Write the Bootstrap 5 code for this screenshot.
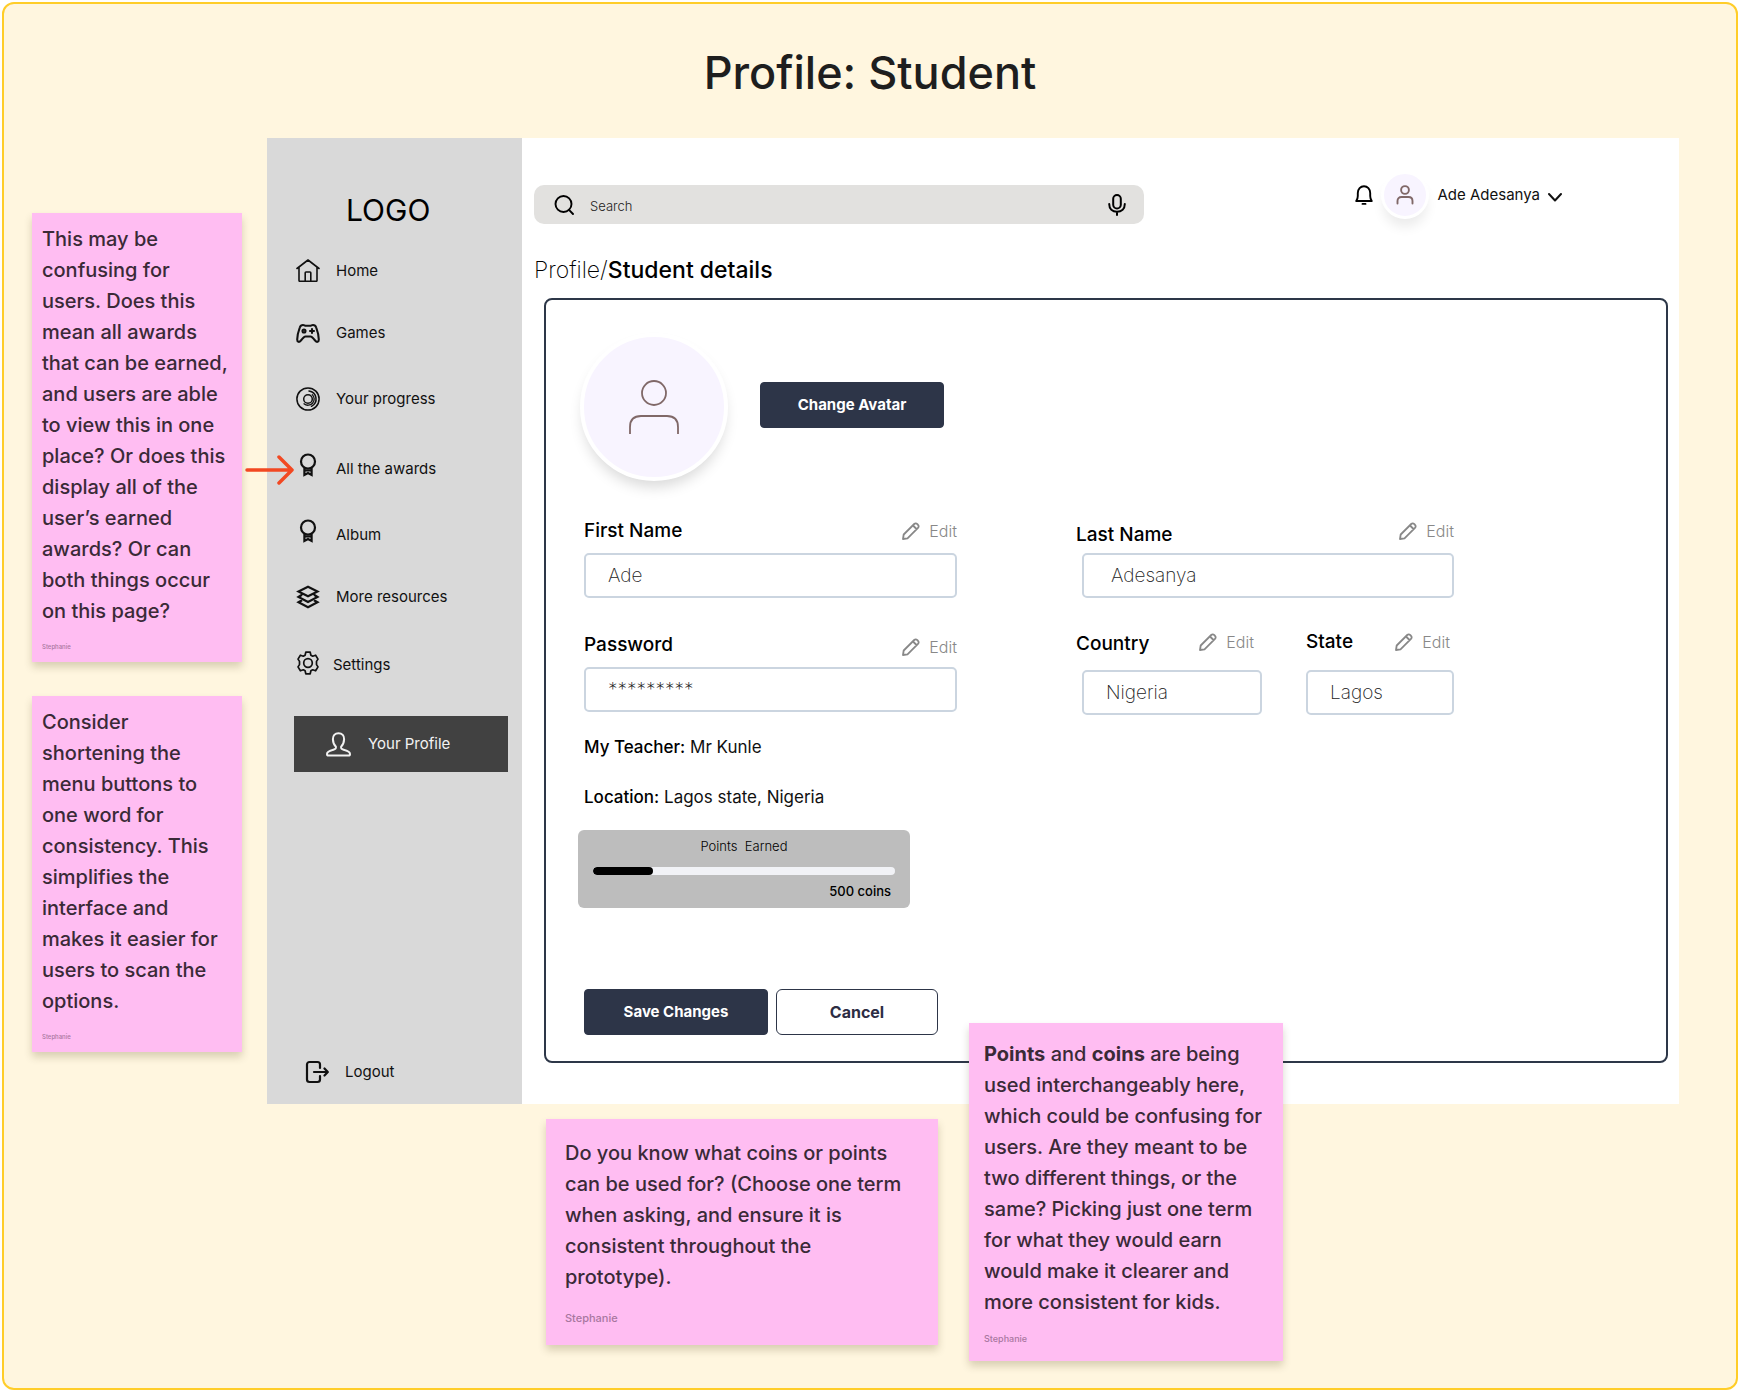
<!DOCTYPE html>
<html lang="en">
<head>
<meta charset="utf-8">
<meta name="viewport" content="width=device-width, initial-scale=1">
<title>Profile: Student</title>
<link rel="stylesheet" href="https://cdn.jsdelivr.net/npm/bootstrap@5.3.0/dist/css/bootstrap.min.css">
<style>
  body { font-family: Inter, "Liberation Sans", sans-serif; background: #fff; color: #000; padding: 2px; }
  svg { display: block; flex: none; fill: none; stroke: currentColor; stroke-linecap: round; stroke-linejoin: round; }
  .board { background: #fff6df; border: 2px solid #ffcd29; border-radius: 12px; padding-bottom: 27px; }
  .board-title { font-size: 45px; line-height: 58px; font-weight: 500; color: #1e1e1e; padding: 40px 0 36px; }
  .board-row { padding: 0 57px 0 28px; gap: 25px; }
  .side-notes { flex: 0 0 210px; padding-top: 75px; gap: 34px; }

  /* sticky notes */
  .sticky { background: #ffbdf2; color: #3a2a37; font-size: 20px; line-height: 31px; font-weight: 500; box-shadow: 0 5px 8px rgba(60,50,0,.2); }
  .sticky p { margin: 0; }
  .sticky .sticky-by { color: #a877a0; }
  .sticky-s { padding: 11px 8px 8px 10px; }
  .sticky-s .sticky-by { font-size: 6px; line-height: 12px; margin-top: 14px; margin-bottom: 1px; }
  .sticky-m { padding: 16px 15px; flex: 0 0 314px; margin-top: -81px; position: relative; }
  .sticky-m .sticky-by { font-size: 9px; line-height: 12px; margin-top: 15px; }
  .sticky-l { padding: 19px; flex: 0 0 392px; margin-top: 15px; }
  .sticky-l .sticky-by { font-size: 11px; line-height: 16px; margin-top: 17px; }
  .bottom-notes { padding-left: 542px; gap: 31px; align-items: flex-start; }
  .callout-arrow { position: absolute; left: -22px; top: 317px; color: #f24822; }

  /* sidebar */
  .app { position: relative; background: #fff; }
  .side { flex: 0 0 255px; background: #d9d9d9; padding: 53px 14px 17px 27px; }
  .brand { font-size: 30px; line-height: 38px; padding-left: 52px; margin-bottom: 11px; }
  .side a { color: #111; font-size: 15px; line-height: 24px; text-decoration: none; display: flex; align-items: center; }
  .side li a { height: 62px; gap: 16px; padding-left: 2px; }
  .side li.tall a { height: 70px; }
  .side li.last a { height: 74px; gap: 13px; }
  .side a.current { height: 56px; background: #414141; color: #f2f2f2; margin-top: 14px; padding-left: 32px; gap: 17px; }
  .side .logout { padding-left: 11px; gap: 16px; height: 30px; }

  /* top bar */
  .main { padding: 33px 11px 41px 12px; min-width: 0; }
  .topbar { padding-right: 106px; }
  .search { flex: 0 1 610px; height: 39px; margin-top: 14px; background: #e2e1df; border-radius: 10px; padding: 0 18px 0 20px; }
  .search input { flex: 1; min-width: 0; border: 0; background: none; outline: 0; font-size: 13px; font-weight: 300; line-height: 20px; padding: 3px 0 0; color: #222; }
  .search input::placeholder { color: #222; opacity: 1; }
  .search button, .user, .edit, .bell { border: 0; background: none; padding: 0; color: inherit; }
  .user { font-size: 15px; line-height: 24px; gap: 8px; color: #111; }
  .face { border-radius: 50%; background: #f8f4ff; border: 3px solid #fff; color: #806868; display: flex; align-items: center; justify-content: center; }
  .face-s { width: 48px; height: 48px; box-shadow: 0 10px 12px -2px rgba(0,0,0,.08); }
  .face-l { width: 148px; height: 148px; border-width: 4px; margin-left: -4px; box-shadow: 0 9px 14px -3px rgba(0,0,0,.15); }

  /* profile form */
  .crumbs { font-size: 23px; line-height: 28px; margin: 32px 0 14px; }
  .crumbs a { color: #000; font-weight: 200; text-decoration: none; }
  .crumbs span { font-weight: 500; }
  .panel { border: 2px solid #2d3748; border-radius: 8px; margin-left: 10px; padding: 33px 212px 26px 38px; }
  .btn-navy { --bs-btn-bg: #2d3548; --bs-btn-color: #fff; --bs-btn-border-color: #2d3548; --bs-btn-hover-bg: #3d475c; --bs-btn-hover-color: #fff; }
  .btn-line { --bs-btn-bg: #fff; --bs-btn-color: #2d2d44; --bs-btn-border-color: #2d3548; --bs-btn-hover-bg: #eef0f5; }
  .panel .btn { height: 46px; border-radius: 4px; font-size: 15px; line-height: 20px; font-weight: 700; }
  .panel .btn-line { border-radius: 6px; font-size: 16px; width: 162px; }
  .w-btn { width: 184px; }
  .fields { display: grid; grid-template-columns: 373fr 378fr; gap: 119px; margin-top: 36px; }
  .field-head { height: 28px; margin-bottom: 8px; display: flex; justify-content: space-between; align-items: center; }
  .second-head { margin-top: 33px; }
  .field-head label { font-size: 19px; line-height: 24px; font-weight: 500; }
  .edit { display: flex; align-items: center; gap: 9px; font-size: 16px; line-height: 20px; font-weight: 300; color: #888; }
  .box { width: 100%; height: 45px; border: 2px solid #cbd5e0; border-radius: 5px; background: #fff; color: #222; font-size: 19px; font-weight: 200; line-height: 24px; padding: 0 22px; }
  .wide { padding-left: 6px; }
  .wide .box { padding-left: 27px; }
  .place-row { gap: 44px; margin-top: 30px; }
  .place-row .field-head { margin-bottom: 14px; }
  .place-a { flex: 186 1 0; min-width: 0; }
  .place-b { flex: 148 1 0; min-width: 0; }
  .ps-inset { padding-left: 6px; }
  .facts { font-size: 17px; line-height: 26px; color: #111; margin-top: 19px; }
  .facts b { font-weight: 500; color: #000; }
  .points { width: 332px; height: 78px; background: #bdbdbd; border-radius: 6px; padding: 7px 15px; margin: 20px 0 81px -6px; font-size: 13px; line-height: 18px; }
  .points .progress { height: 8px; border-radius: 4px; background: #f1f2f6; margin: 12px 0 7px; }
  .points .progress-bar { background: #000; border-radius: 4px; }
</style>
</head>
<body>
<svg class="d-none" aria-hidden="true">
  <symbol id="pencil" viewBox="0 0 18 18"><path stroke-width="1.800" d="M1 17l.7-4.500L12.200 2c.9-.9 2.200-.9 3 0l.8.800c.9.900.9 2.200 0 3L5.500 16.300zM11 3.500 14.500 7"/></symbol>
  <symbol id="rosette" viewBox="0 0 24 24"><g stroke-width="2.200"><circle cx="12" cy="8.500" r="7"/><path stroke-linejoin="miter" stroke-linecap="butt" d="M8.400 14.500V22l3.600-2 3.600 2v-7.500M8.400 17.300h7.200"/></g></symbol>
</svg>
<div class="board">
  <h1 class="board-title text-center mb-0">Profile: Student</h1>

  <div class="board-row d-flex">
    <div class="side-notes d-flex flex-column">
      <div class="sticky sticky-s">
        <p>This may be<br>confusing for<br>users. Does this mean all awards that can be earned, and users are able to view this in one place? Or does this display all of the user’s earned awards? Or can both things occur on this page?</p>
        <p class="sticky-by">Stephanie</p>
      </div>
      <div class="sticky sticky-s">
        <p>Consider shortening the menu buttons to one word for consistency. This simplifies the interface and makes it easier for users to scan the options.</p>
        <p class="sticky-by">Stephanie</p>
      </div>
    </div>

    <div class="app d-flex flex-grow-1">
      <nav class="side d-flex flex-column" aria-label="Main">
        <div class="brand">LOGO</div>
        <ul class="list-unstyled mb-0">
          <li><a href="#"><svg width="24" height="24" viewBox="0 0 24 24" stroke-width="1.600"><path d="M1 9.500 12 1l11 8.500M3 8.500v13a.8.8 0 0 0 .8.800h16.400a.8.8 0 0 0 .8-.8v-13M9.200 22v-8.200a.8.8 0 0 1 .8-.8h4a.8.8 0 0 1 .8.800V22"/></svg>Home</a></li>
          <li><a href="#"><svg width="24" height="24" viewBox="0 0 24 24" stroke-width="2.100"><path d="M7 4c-2 0-2.700 1-3.200 2.500C2.500 10 1.200 15 1.200 18.500c0 3 2.300 2.800 3.600 1.200C6.500 17.500 8 15.500 9.500 15.500h5c1.500 0 3 2 4.700 4.200 1.300 1.600 3.600 1.800 3.600-1.200 0-3.500-1.300-8.500-2.600-12C19.700 5 19 4 17 4c-1.500 0-1.500.8-3 .8h-4C8.500 4.800 8.500 4 7 4z"/><circle cx="8" cy="10" r="1.500"/><path d="M16 8v4M14 10h4"/></svg>Games</a></li>
          <li class="tall"><a href="#"><svg width="24" height="24" viewBox="0 0 24 24" stroke-width="1.500"><circle cx="12" cy="12" r="11.100"/><circle cx="12" cy="12" r="4.300"/><path d="M13 4a8.100 8.100 0 0 1 2.500 15.300"/><path stroke-width="1.300" d="M16.300 7.600a6.200 6.200 0 0 1-8.300 9.200"/></svg>Your progress</a></li>
          <li class="tall"><a href="#"><svg class="mb-2" width="24" height="24"><use href="#rosette"/></svg>All the awards</a></li>
          <li><a href="#"><svg class="mb-2" width="24" height="24"><use href="#rosette"/></svg>Album</a></li>
          <li><a href="#"><svg width="24" height="24" viewBox="0 0 24 24" stroke-width="2.200"><path stroke-linejoin="miter" stroke-linecap="butt" d="M12 1.700 21.500 6.500 12 11.300 2.500 6.500zM6 9.800 2.500 12l9.500 4.900 9.500-4.900L18 9.800M6 15.200 2.500 17.300 12 22.200l9.500-4.900-3.500-2.100"/></svg>More resources</a></li>
          <li class="last"><a href="#"><svg class="mb-1" width="24" height="24" viewBox="0 0 24 24" stroke-width="1.700"><circle cx="12" cy="12" r="4.300"/><path d="M9.800 1.200h4.400l.7 3 1.800 1 2.900-1L22 8.100l-1.500 2.300v3.200l1.500 2.300-2.400 3.900-2.900-1-1.800 1-.7 3H9.800l-.7-3-1.800-1-2.900 1L2 15.900l1.500-2.300v-3.200L2 8.100l2.400-3.900 2.900 1 1.800-1z"/></svg>Settings</a></li>
        </ul>
        <a href="#" class="current" aria-current="page"><svg width="25" height="25" viewBox="0 0 25 25" stroke-width="2"><path d="M12.500 1.200c3.600 0 5.800 2.300 5.600 6-.1 3.300-1 5.500-3 7.500-.3 2 .3 2.500 2.500 3 3.700.9 6.400 2.200 6.400 4.200 0 1.200-.5 1.600-1.500 1.600h-20C1.500 23.500 1 23 1 21.900c0-2 2.700-3.300 6.400-4.200 2.200-.5 2.800-1 2.500-3-2-2-2.900-4.200-3-7.500-.1-3.700 2-6 5.600-6z"/></svg>Your Profile</a>
        <a href="#" class="logout mt-auto"><svg width="24" height="24" viewBox="0 0 24 24" stroke-width="2.200"><path d="M15 8V4.500A2.500 2.500 0 0 0 12.500 2h-8A2.500 2.500 0 0 0 2 4.500v15A2.500 2.500 0 0 0 4.500 22h8a2.500 2.500 0 0 0 2.500-2.500V16M9 12h13.500M19.500 8.500 22.800 12l-3.300 3.500"/></svg>Logout</a>
      </nav>

      <main class="main flex-grow-1">
        <header class="topbar d-flex justify-content-between align-items-start">
          <form class="search d-flex align-items-center" role="search">
            <svg width="20" height="20" viewBox="0 0 20 20" stroke-width="1.900"><circle cx="9.500" cy="9" r="8"/><path d="m15 14.800 4 4.200"/></svg>
            <input class="ms-3" type="search" placeholder="Search" aria-label="Search">
            <button type="button" aria-label="Voice search"><svg width="18" height="22" viewBox="0 0 18 22" stroke-width="2"><rect x="5.200" y="1" width="7.600" height="13.500" rx="3.800"/><path d="M1.200 10c0 5 3.300 7.700 7.800 7.700s7.800-2.700 7.800-7.700M9 18v3"/></svg></button>
          </form>
          <div class="d-flex align-items-center">
            <button type="button" class="bell" aria-label="Notifications"><svg width="18" height="20" viewBox="0 0 18 20" stroke-width="1.900"><path d="M1.200 16h15.600c-1-1.200-1.600-2.500-1.600-5V8C15.200 4 12.500 1.200 9 1.200S2.800 4 2.800 8v3c0 2.500-.6 3.800-1.600 5zM7.500 18.900h3"/></svg></button>
            <button type="button" class="user d-flex align-items-center ms-2" aria-haspopup="true">
              <span class="face face-s"><svg width="18" height="20" viewBox="0 0 18 20" stroke-width="1.900"><circle cx="9" cy="5" r="3.900"/><path d="M1.500 18.500v-2.500c0-2.500 1.500-4 4-4h7c2.500 0 4 1.500 4 4v2.500"/></svg></span>
              Ade Adesanya
              <svg class="mt-1" width="14" height="10" viewBox="0 0 14 10" stroke-width="2"><path d="m1 2 6 6.500L13 2"/></svg>
            </button>
          </div>
        </header>

        <div class="crumbs"><a href="#">Profile/</a><span>Student details</span></div>

        <form class="panel">
          <div class="d-flex align-items-center gap-4">
            <span class="face face-l"><svg width="52" height="56" viewBox="0 0 52 56" stroke-width="1.800"><circle cx="26" cy="14" r="12"/><path stroke-linecap="butt" d="M2 55V48c0-7 4-11 11-11h26c7 0 11 4 11 11v7"/></svg></span>
            <button type="button" class="btn btn-navy w-btn mb-1 ms-2">Change Avatar</button>
          </div>

          <div class="fields">
            <div>
              <div class="field-head"><label for="first">First Name</label><button type="button" class="edit"><svg width="18" height="18"><use href="#pencil"/></svg>Edit</button></div>
              <input id="first" class="box" type="text" value="Ade">
              <div class="field-head second-head"><label for="pass">Password</label><button type="button" class="edit pt-1"><svg width="18" height="18"><use href="#pencil"/></svg>Edit</button></div>
              <input id="pass" class="box" type="text" value="*********" autocomplete="off">
            </div>
            <div>
              <div class="field-head"><label for="last" class="pt-2">Last Name</label><button type="button" class="edit"><svg width="18" height="18"><use href="#pencil"/></svg>Edit</button></div>
              <div class="wide"><input id="last" class="box" type="text" value="Adesanya"></div>
              <div class="place-row d-flex">
                <div class="place-a">
                  <div class="field-head pe-2"><label for="country" class="pt-1">Country</label><button type="button" class="edit"><svg width="18" height="18"><use href="#pencil"/></svg>Edit</button></div>
                  <div class="ps-inset"><input id="country" class="box" type="text" value="Nigeria"></div>
                </div>
                <div class="place-b">
                  <div class="field-head pe-1"><label for="state">State</label><button type="button" class="edit"><svg width="18" height="18"><use href="#pencil"/></svg>Edit</button></div>
                  <input id="state" class="box" type="text" value="Lagos">
                </div>
              </div>
            </div>
          </div>

          <div class="facts">
            <div class="mb-4"><b>My Teacher:</b> Mr Kunle</div>
            <div><b>Location:</b> Lagos state, Nigeria</div>
          </div>

          <div class="points">
            <div class="text-center fw-light">Points&nbsp; Earned</div>
            <div class="progress" role="progressbar" aria-label="Points earned" aria-valuenow="20" aria-valuemin="0" aria-valuemax="100"><div class="progress-bar" style="width: 20%"></div></div>
            <div class="text-end fw-medium pe-1">500 coins</div>
          </div>

          <div class="d-flex gap-2">
            <button type="submit" class="btn btn-navy w-btn">Save Changes</button>
            <button type="button" class="btn btn-line">Cancel</button>
          </div>
        </form>
      </main>

      <svg class="callout-arrow" width="50" height="30" viewBox="0 0 50 30" stroke-width="3.500" aria-hidden="true"><path d="M2 15h45M34 2l13 13-13 13"/></svg>
    </div>
  </div>

  <div class="bottom-notes d-flex">
    <div class="sticky sticky-l">
      <p>Do you know what coins or points can be used for? (Choose one term when asking, and ensure it is consistent throughout the prototype).</p>
      <p class="sticky-by">Stephanie</p>
    </div>
    <div class="sticky sticky-m">
      <p><strong>Points</strong> and <strong>coins</strong> are being used interchangeably here, which could be confusing for users. Are they meant to be two different things, or the same? Picking just one term for what they would earn would make it clearer and more consistent for kids.</p>
      <p class="sticky-by">Stephanie</p>
    </div>
  </div>
</div>
<script src="https://cdn.jsdelivr.net/npm/bootstrap@5.3.0/dist/js/bootstrap.bundle.min.js"></script>
</body>
</html>
